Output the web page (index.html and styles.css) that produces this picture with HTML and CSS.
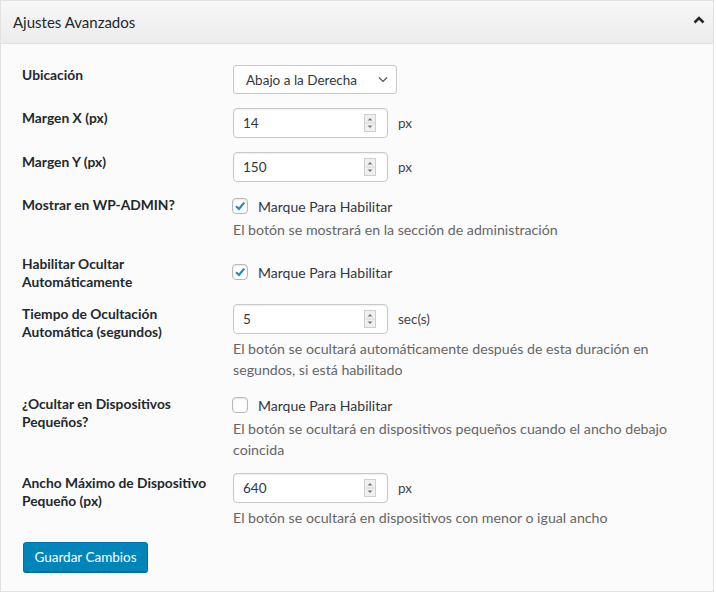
FILE: index.html
```html
<!DOCTYPE html>
<html lang="es">
<head>
<meta charset="utf-8">
<title>Ajustes Avanzados</title>
<link rel="stylesheet" href="styles.css">
</head>
<body>
<div class="postbox">
  <div class="postbox-header">
    <h2 class="title">Ajustes Avanzados</h2>
    <span class="toggle"><svg width="14" height="10" viewBox="0 0 14 10"><path d="M2.5 7.5 L7 3 L11.5 7.5" fill="none" stroke="#23282d" stroke-width="2.6"/></svg></span>
  </div>
  <div class="inside">
    <div class="row">
      <div class="label">Ubicación</div>
      <div class="field">
        <div class="line">
          <div class="select"><span>Abajo a la Derecha</span><svg width="10" height="7" viewBox="0 0 10 7"><path d="M1 1.5 L5 5.5 L9 1.5" fill="none" stroke="#555" stroke-width="1.2"/></svg></div>
        </div>
      </div>
    </div>
    <div class="row">
      <div class="label">Margen X (px)</div>
      <div class="field">
        <div class="line">
          <div class="input"><span>14</span><svg class="spin" width="12" height="18" viewBox="0 0 12 18"><rect x="0.5" y="0.5" width="11" height="17" fill="#f0f0f0" stroke="#cfcfcf"/><line x1="1" y1="9" x2="11" y2="9" stroke="#d6d6d6"/><path d="M3.5 6.5 L6 4 L8.5 6.5Z" fill="#7a7a7a"/><path d="M3.5 11.5 L6 14 L8.5 11.5Z" fill="#7a7a7a"/></svg></div>
          <span class="unit">px</span>
        </div>
      </div>
    </div>
    <div class="row">
      <div class="label">Margen Y (px)</div>
      <div class="field">
        <div class="line">
          <div class="input"><span>150</span><svg class="spin" width="12" height="18" viewBox="0 0 12 18"><rect x="0.5" y="0.5" width="11" height="17" fill="#f0f0f0" stroke="#cfcfcf"/><line x1="1" y1="9" x2="11" y2="9" stroke="#d6d6d6"/><path d="M3.5 6.5 L6 4 L8.5 6.5Z" fill="#7a7a7a"/><path d="M3.5 11.5 L6 14 L8.5 11.5Z" fill="#7a7a7a"/></svg></div>
          <span class="unit">px</span>
        </div>
      </div>
    </div>
    <div class="row">
      <div class="label">Mostrar en WP-ADMIN?</div>
      <div class="field">
        <div class="line check-line">
          <span class="checkbox"><svg width="14" height="14" viewBox="0 0 14 14"><path d="M3 7.2 L6 10 L11.2 3.6" fill="none" stroke="#1e8cbe" stroke-width="2.2"/></svg></span>
          <span class="check-label">Marque Para Habilitar</span>
        </div>
        <p class="desc desc-check">El botón se mostrará en la sección de administración</p>
      </div>
    </div>
    <div class="row">
      <div class="label">Habilitar Ocultar Automáticamente</div>
      <div class="field field-center">
        <div class="line check-line">
          <span class="checkbox"><svg width="14" height="14" viewBox="0 0 14 14"><path d="M3 7.2 L6 10 L11.2 3.6" fill="none" stroke="#1e8cbe" stroke-width="2.2"/></svg></span>
          <span class="check-label">Marque Para Habilitar</span>
        </div>
      </div>
    </div>
    <div class="row">
      <div class="label">Tiempo de Ocultación Automática (segundos)</div>
      <div class="field">
        <div class="line">
          <div class="input"><span>5</span><svg class="spin" width="12" height="18" viewBox="0 0 12 18"><rect x="0.5" y="0.5" width="11" height="17" fill="#f0f0f0" stroke="#cfcfcf"/><line x1="1" y1="9" x2="11" y2="9" stroke="#d6d6d6"/><path d="M3.5 6.5 L6 4 L8.5 6.5Z" fill="#7a7a7a"/><path d="M3.5 11.5 L6 14 L8.5 11.5Z" fill="#7a7a7a"/></svg></div>
          <span class="unit">sec(s)</span>
        </div>
        <p class="desc">El botón se ocultará automáticamente después de esta duración en segundos, si está habilitado</p>
      </div>
    </div>
    <div class="row">
      <div class="label">¿Ocultar en Dispositivos Pequeños?</div>
      <div class="field">
        <div class="line check-line">
          <span class="checkbox"></span>
          <span class="check-label">Marque Para Habilitar</span>
        </div>
        <p class="desc desc-check">El botón se ocultará en dispositivos pequeños cuando el ancho debajo coincida</p>
      </div>
    </div>
    <div class="row">
      <div class="label">Ancho Máximo de Dispositivo Pequeño (px)</div>
      <div class="field">
        <div class="line">
          <div class="input"><span>640</span><svg class="spin" width="12" height="18" viewBox="0 0 12 18"><rect x="0.5" y="0.5" width="11" height="17" fill="#f0f0f0" stroke="#cfcfcf"/><line x1="1" y1="9" x2="11" y2="9" stroke="#d6d6d6"/><path d="M3.5 6.5 L6 4 L8.5 6.5Z" fill="#7a7a7a"/><path d="M3.5 11.5 L6 14 L8.5 11.5Z" fill="#7a7a7a"/></svg></div>
          <span class="unit">px</span>
        </div>
        <p class="desc">El botón se ocultará en dispositivos con menor o igual ancho</p>
      </div>
    </div>
    <div class="actions">
      <button class="btn" type="button">Guardar Cambios</button>
    </div>
  </div>
</div>
</body>
</html>
```
FILE: styles.css
```css
html, body {
  margin: 0;
  padding: 0;
  background: #ffffff;
}
body {
  font-family: Lato, "Open Sans", "Liberation Sans", sans-serif;
  color: #23282d;
  font-size: 13px;
}
.postbox {
  width: 712px;
  height: 590px;
  border: 1px solid #e2e2e2;
  background: #fbfbfb;
  display: flex;
  flex-direction: column;
}
.postbox-header {
  height: 42px;
  border-bottom: 1px solid #e0e0e0;
  background: linear-gradient(#f7f7f7, #ececec);
  display: flex;
  align-items: center;
  justify-content: space-between;
  padding: 0 6px 0 12px;
}
.title {
  margin: 0;
  font-size: 15px;
  font-weight: 400;
  color: #23282d;
}
.toggle {
  display: flex;
  width: 16px;
  height: 14px;
  align-items: center;
  justify-content: center;
  margin-top: -4px;
}
.inside {
  padding: 21px 22px 0 21px;
  display: flex;
  flex-direction: column;
  gap: 13.75px;
}
.row {
  display: grid;
  grid-template-columns: 211px 1fr;
  align-items: start;
}
.label {
  font-weight: 700;
  font-size: 13.8px;
  line-height: 18px;
  padding-top: 1px;
  padding-right: 4px;
  color: #23282d;
}
.field-center {
  align-self: center;
}
.line {
  display: flex;
  align-items: center;
}
.check-line {
  height: 22px;
}
.select {
  box-sizing: border-box;
  width: 164px;
  height: 29px;
  border: 1px solid #c8c8c8;
  border-radius: 3px;
  background: #fff;
  display: flex;
  align-items: center;
  justify-content: space-between;
  padding: 0 8px 0 12px;
  font-size: 13.5px;
  color: #32373c;
}
.input {
  box-sizing: border-box;
  width: 155px;
  height: 30px;
  border: 1px solid #c8c8c8;
  border-radius: 4px;
  background: #fff;
  box-shadow: inset 0 1px 2px rgba(0,0,0,0.07);
  display: flex;
  align-items: center;
  justify-content: space-between;
  padding: 0 11px 0 9px;
  font-size: 13.5px;
  color: #32373c;
}
.unit {
  margin-left: 10px;
  font-size: 13.5px;
  color: #444;
}
.checkbox {
  box-sizing: border-box;
  width: 16px;
  height: 16px;
  border: 1px solid #b4b9be;
  border-radius: 4px;
  background: #fff;
  box-shadow: inset 0 1px 2px rgba(0,0,0,0.1);
  display: flex;
  align-items: center;
  justify-content: center;
  margin-left: -1px;
}
.check-label {
  margin-left: 10px;
  font-size: 14px;
  color: #32373c;
}
.desc {
  margin: 4px 0 0;
  font-size: 14.2px;
  line-height: 21px;
  color: #666;
  max-width: 460px;
}
.desc-check {
  margin-top: 1.5px;
}
.actions {
  margin-top: 0;
  display: flex;
}
.btn {
  font-family: inherit;
  font-size: 13.5px;
  color: #fff;
  background: #0085ba;
  border: 1px solid #0073aa;
  border-radius: 3px;
  height: 30px;
  width: 125px;
  padding: 0;
  margin-left: 1px;
  box-shadow: 0 1px 0 #006799;
}
```
